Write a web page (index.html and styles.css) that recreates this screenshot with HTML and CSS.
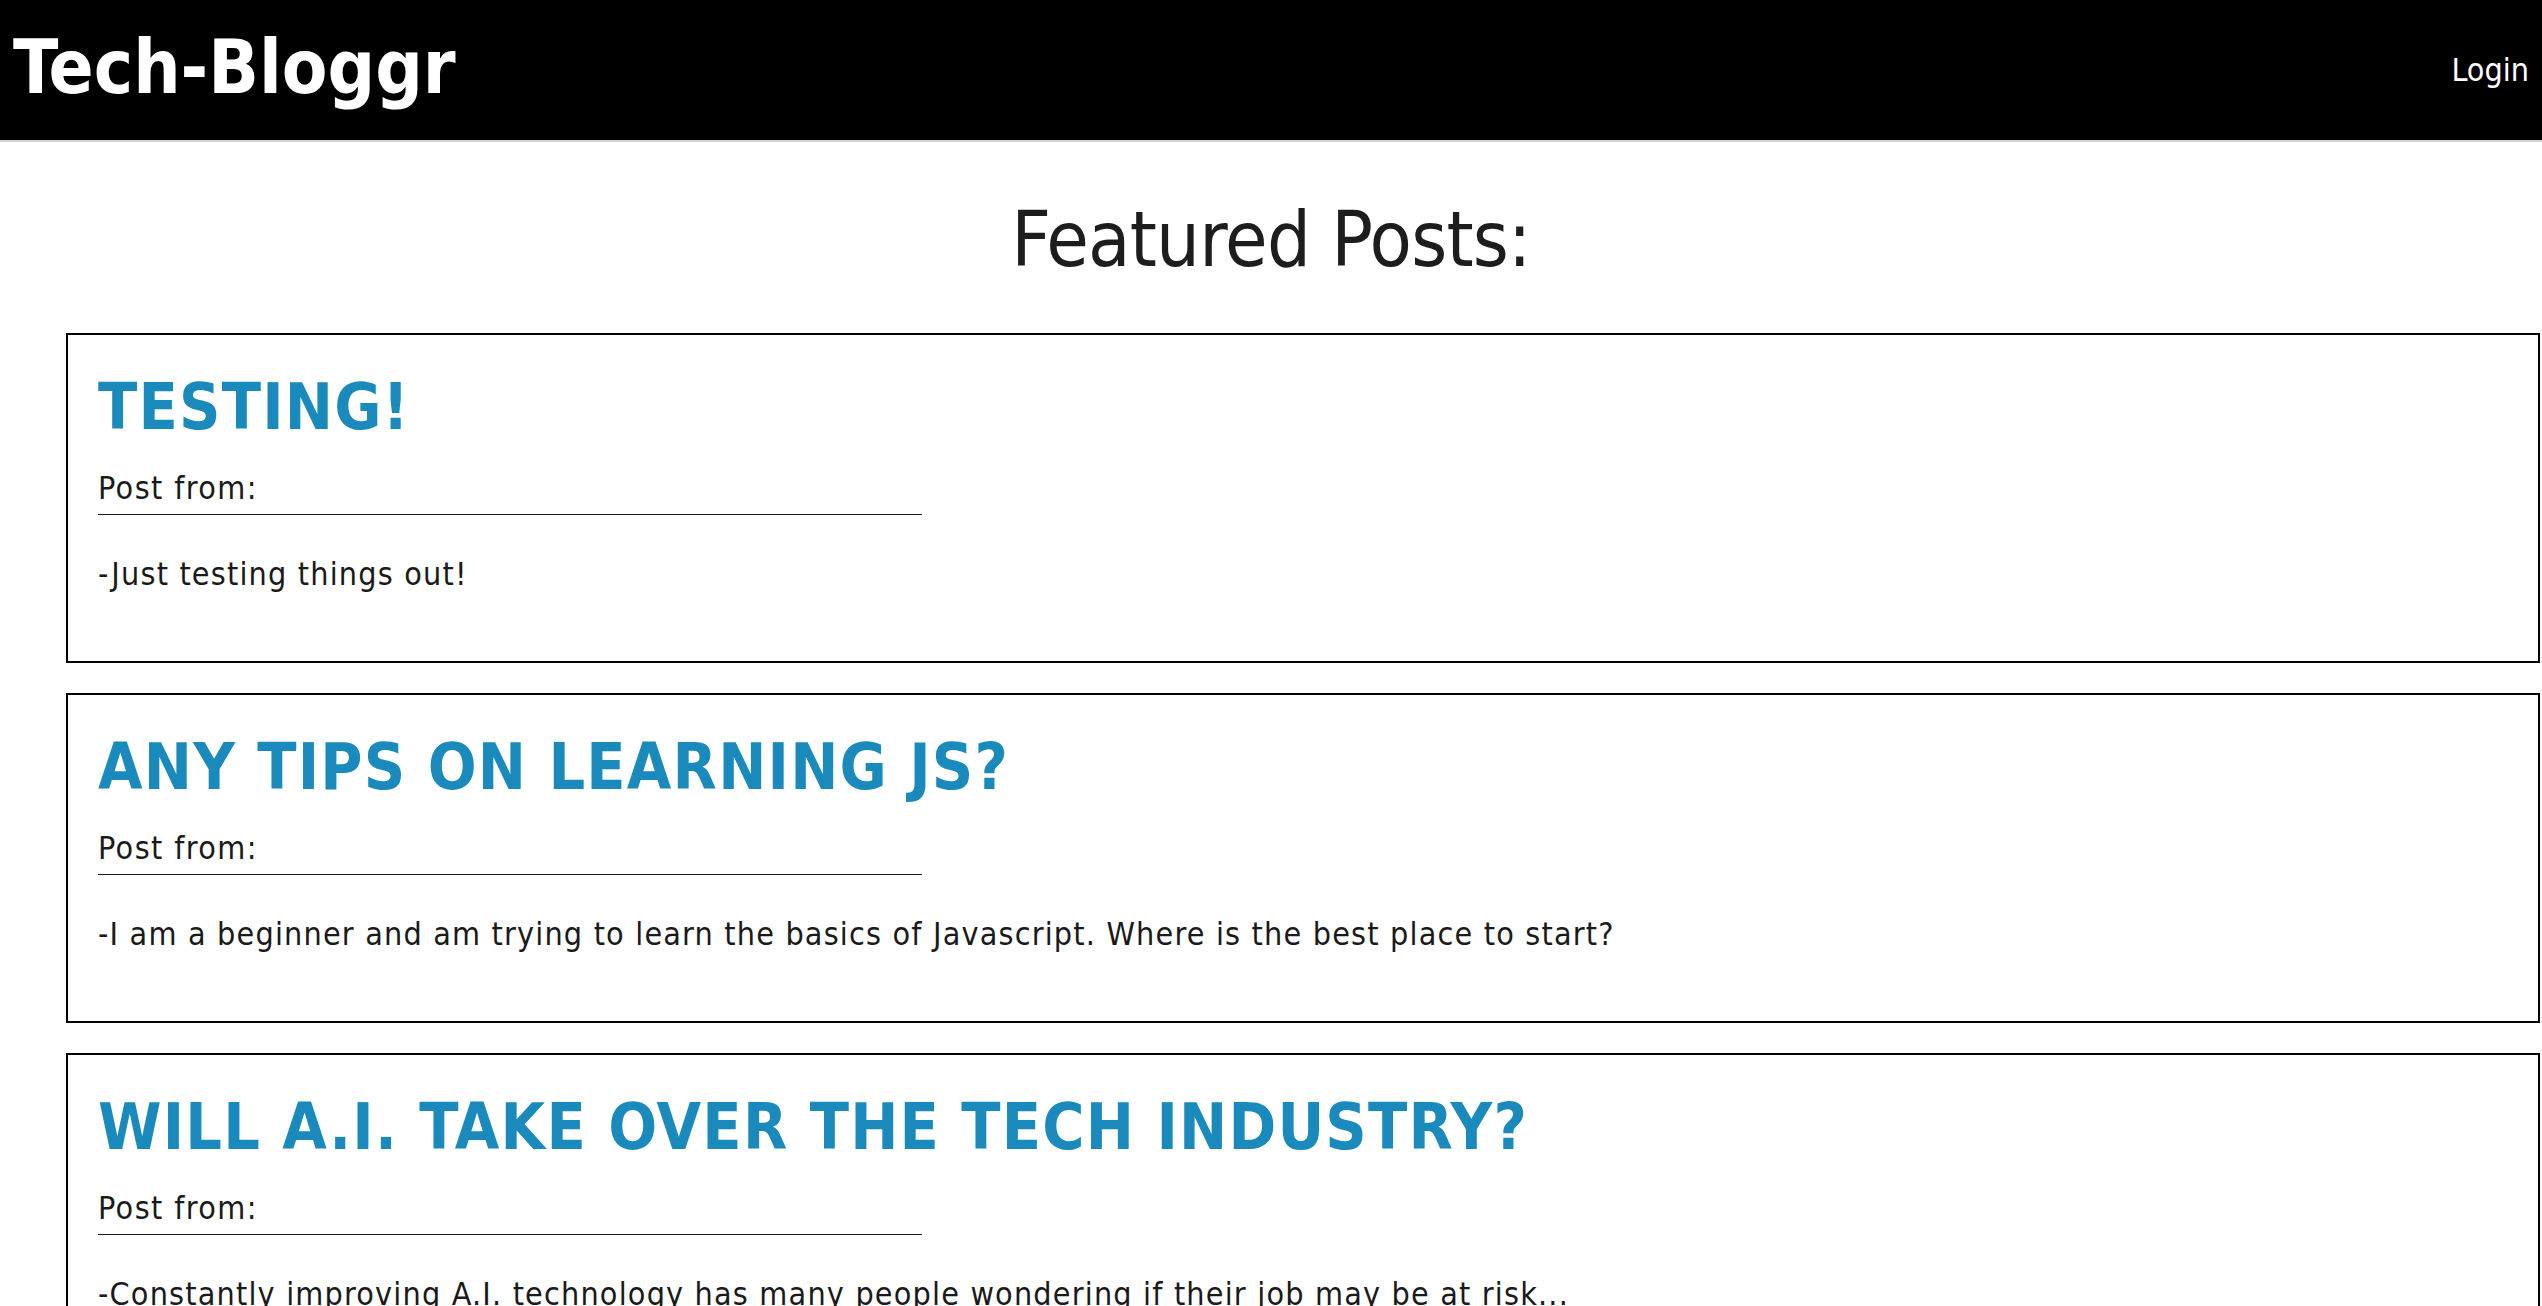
FILE: index.html
```html
<!DOCTYPE html>
<html lang="en">
<head>
<meta charset="utf-8">
<title>Tech-Bloggr</title>
<link rel="stylesheet" href="styles.css">
</head>
<body>
<header class="site-header">
  <h1 class="brand">Tech-Bloggr</h1>
  <nav class="nav"><a class="nav-link" href="#">Login</a></nav>
</header>
<main class="main">
  <h2 class="page-title">Featured Posts:</h2>
  <section class="posts">
    <article class="post">
      <h3 class="post-title">TESTING!</h3>
      <p class="post-meta">Post from:</p>
      <p class="post-body">-Just testing things out!</p>
    </article>
    <article class="post">
      <h3 class="post-title">ANY TIPS ON LEARNING JS?</h3>
      <p class="post-meta">Post from:</p>
      <p class="post-body">-I am a beginner and am trying to learn the basics of Javascript. Where is the best place to start?</p>
    </article>
    <article class="post">
      <h3 class="post-title">WILL A.I. TAKE OVER THE TECH INDUSTRY?</h3>
      <p class="post-meta">Post from:</p>
      <p class="post-body">-Constantly improving A.I. technology has many people wondering if their job may be at risk...</p>
    </article>
  </section>
</main>
</body>
</html>
```

FILE: styles.css
```css
html, body {
  margin: 0;
  padding: 0;
  background: #ffffff;
}

body {
  font-family: "DejaVu Sans Condensed", "DejaVu Sans", sans-serif;
  font-stretch: condensed;
  color: #1a1a1a;
  overflow: hidden;
}

.site-header {
  display: flex;
  justify-content: space-between;
  align-items: center;
  box-sizing: border-box;
  height: 142px;
  padding: 0 13px;
  background: #000000;
  border-bottom: 2px solid #d3d3d3;
}

.brand {
  margin: 0 0 6px 0;
  font-size: 74px;
  line-height: 86px;
  font-weight: bold;
  color: #ffffff;
}

.nav-link {
  font-size: 32px;
  line-height: 37px;
  color: #ffffff;
  text-decoration: none;
}

.main {
  padding: 53px 2px 0 66px;
}

.page-title {
  margin: 0 0 48px 0;
  padding-right: 64px;
  text-align: center;
  font-size: 77px;
  line-height: 90px;
  font-weight: normal;
  letter-spacing: -0.8px;
  color: #1d1d1d;
}

.posts {
  display: flex;
  flex-direction: column;
  gap: 30px;
}

.post {
  border: 2px solid #000000;
  padding: 35px 30px 68px 30px;
}

.post-title {
  margin: 0;
  font-size: 64px;
  line-height: 74px;
  font-weight: bold;
  letter-spacing: 1.2px;
  color: #1a8abd;
}

.post-meta {
  margin: 26px 0 0 0;
  width: 824px;
  padding-bottom: 7px;
  border-bottom: 1px solid #1a1a1a;
  font-size: 32px;
  line-height: 37px;
  letter-spacing: 1.4px;
}

.post-body {
  margin: 41px 0 0 0;
  font-size: 32px;
  line-height: 37px;
  letter-spacing: 1.18px;
}
```
